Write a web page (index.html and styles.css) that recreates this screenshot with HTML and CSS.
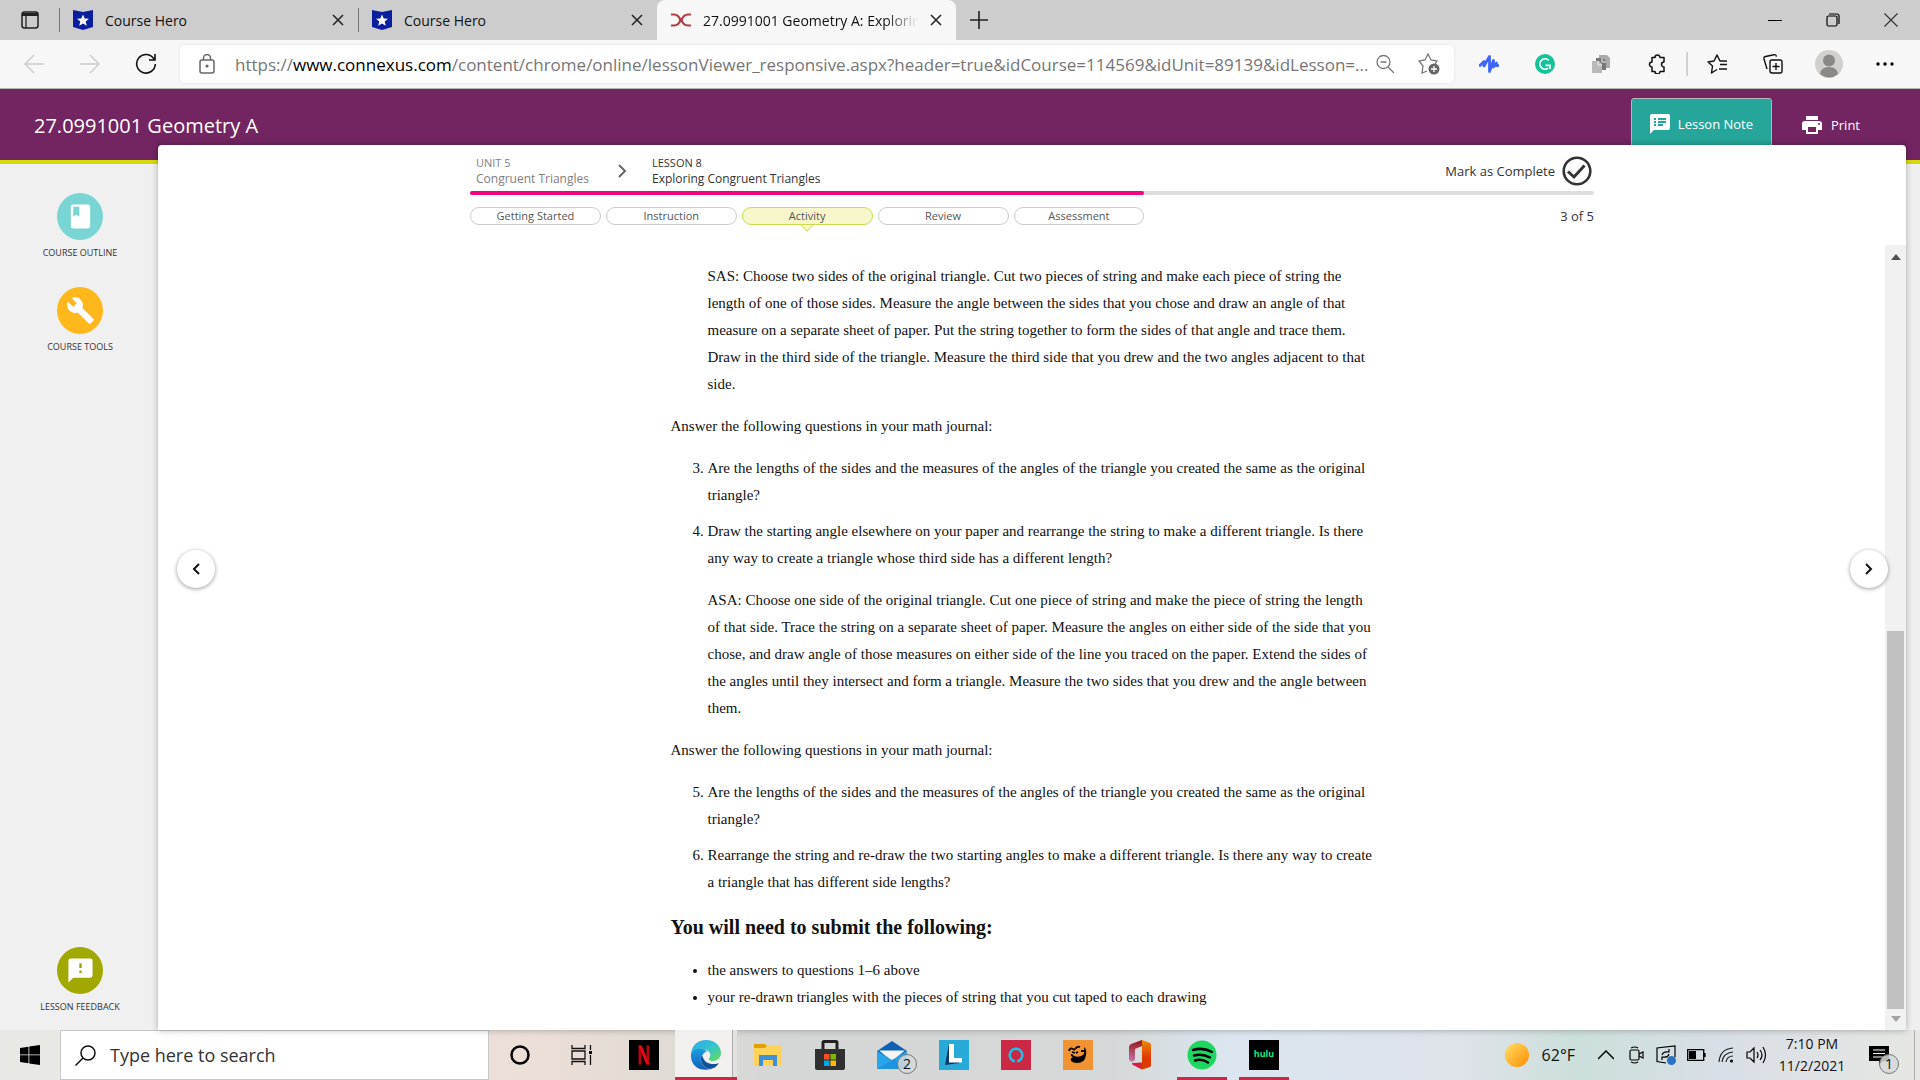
FILE: index.html
```html
<!DOCTYPE html>
<html lang="en">
<head>
<meta charset="utf-8">
<meta name="viewport" content="width=device-width, initial-scale=1">
<title>27.0991001 Geometry A: Exploring Congruent Triangles</title>
<link rel="stylesheet" href="styles.css">
</head>
<body>
<svg class="defs" aria-hidden="true">
  <defs>
    <linearGradient id="edge-a" x1="0" y1="0" x2="1" y2="1"><stop offset="0" stop-color="#2aa7e6"/><stop offset=".5" stop-color="#35c3d0"/><stop offset="1" stop-color="#66dd55"/></linearGradient>
    <linearGradient id="edge-b" x1="0" y1="0" x2="0" y2="1"><stop offset="0" stop-color="#1b9de2"/><stop offset="1" stop-color="#1160b8"/></linearGradient>
    <linearGradient id="office" x1="0" y1="0" x2="0" y2="1"><stop offset="0" stop-color="#f08a00"/><stop offset=".6" stop-color="#dc3c00"/></linearGradient>
    <linearGradient id="office-left" x1="0" y1="0" x2="0" y2="1"><stop offset="0" stop-color="#9c1414"/><stop offset="1" stop-color="#c07ab0"/></linearGradient>
    <linearGradient id="sun" x1="0" y1="0" x2="1" y2="1"><stop offset="0" stop-color="#ffe066"/><stop offset="1" stop-color="#ff8c00"/></linearGradient>
    <symbol id="hero" viewBox="0 0 20 20"><path d="M0 0l10 2L20 0v17l-10 3L0 17z" fill="#0a1e9e"/><path d="M10 4.500l1.700 4 4.300.3-3.300 2.800 1.100 4.200-3.800-2.300-3.800 2.300 1.100-4.200L4 8.800l4.300-.3z" fill="#fff"/></symbol>
    <symbol id="x" viewBox="0 0 12 12"><path d="M1 1l10 10M11 1L1 11" fill="none" stroke="#222" stroke-width="1.500"/></symbol>
  </defs>
</svg>
<div class="screen">
  <header class="browser">
    <nav class="tabs" aria-label="Browser tabs">
      <button class="tab-menu" aria-label="Tab actions"><svg width="20" height="20" viewBox="0 0 20 20"><rect x="2" y="2" width="16" height="16" rx="2.500" fill="none" stroke="#222" stroke-width="1.500"/><path d="M2 3h16v3H2z" fill="#222"/><path d="M6 6v12" stroke="#222" stroke-width="1.300"/></svg></button>
      <div class="tab"><svg width="20" height="20"><use href="#hero"/></svg><span class="tab-title">Course Hero</span><button class="close" aria-label="Close tab"><svg width="12" height="12"><use href="#x"/></svg></button></div>
      <div class="tab"><svg width="20" height="20"><use href="#hero"/></svg><span class="tab-title">Course Hero</span><button class="close" aria-label="Close tab"><svg width="12" height="12"><use href="#x"/></svg></button></div>
      <div class="tab active"><svg width="20" height="20" viewBox="0 0 20 20" fill="none" stroke="#b13a43" stroke-width="2.200"><path d="M0 4.500h3c4 0 5.500 3 6.500 5.500C8.500 13 7 15.500 3 15.500H0M20 4.500h-3c-4 0-5.500 3-6.500 5.500 1 3 2.500 5.500 6.500 5.500h3"/></svg><span class="tab-title fade">27.0991001 Geometry A: Explorin</span><button class="close" aria-label="Close tab"><svg width="12" height="12"><use href="#x"/></svg></button></div>
      <button class="new-tab" aria-label="New tab"><svg width="18" height="18" viewBox="0 0 18 18"><path d="M9 0v18M0 9h18" stroke="#222" stroke-width="1.600"/></svg></button>
      <div class="window-buttons">
        <button aria-label="Minimize"><svg width="14" height="14"><path d="M0 7.500h14" stroke="#000"/></svg></button>
        <button aria-label="Restore"><svg width="14" height="14" viewBox="0 0 14 14" fill="none" stroke="#000" stroke-width="1.200"><rect x="1" y="3" width="10" height="10" rx="1.500"/><path d="M3 1h8q2 0 2 2v8"/></svg></button>
        <button aria-label="Close"><svg width="14" height="14" viewBox="0 0 14 14"><path d="M.5 .5l13 13M13.500 .5l-13 13" stroke="#333" stroke-width="1.200"/></svg></button>
      </div>
    </nav>
    <div class="toolbar">
      <button class="tool" aria-label="Back"><svg width="20" height="20" viewBox="0 0 20 20" fill="none" stroke="#ccc" stroke-width="1.500"><path d="M20 10H1M10 1l-9 9 9 9"/></svg></button>
      <button class="tool" aria-label="Forward"><svg width="20" height="20" viewBox="0 0 20 20" fill="none" stroke="#ccc" stroke-width="1.500"><path d="M0 10h19M10 1l9 9-9 9"/></svg></button>
      <button class="tool" aria-label="Refresh"><svg width="22" height="22" viewBox="0 0 22 22" fill="none" stroke="#111" stroke-width="1.600"><path d="M19 6a9.300 9.300 0 1 0 1.300 5M20 1v6h-6"/></svg></button>
      <div class="address">
        <svg width="16" height="20" viewBox="0 0 16 20" fill="none" stroke="#666" stroke-width="1.500"><rect x="1" y="6" width="14" height="13" rx="2"/><path d="M4.500 6V4a3.500 3.500 0 0 1 7 0v2"/><circle cx="8" cy="12" r=".8" fill="#666"/></svg>
        <span class="url">https://<b>www.connexus.com</b>/content/chrome/online/lessonViewer_responsive.aspx?header=true&amp;idCourse=114569&amp;idUnit=89139&amp;idLesson=...</span>
        <button class="in-address" aria-label="Zoom out"><svg width="18" height="20" viewBox="0 0 18 20" fill="none" stroke="#777" stroke-width="1.300"><circle cx="7.500" cy="8" r="6.500"/><path d="M12 13l6 6M4.500 8h6"/></svg></button>
        <button class="in-address star" aria-label="Add to favorites"><svg width="22" height="22" viewBox="0 0 22 22" fill="none" stroke="#777" stroke-width="1.300"><path d="M9 18l-5 2 1-7-4-5 6-1 3-6 3 6 6 1-2 3"/><circle cx="16" cy="16" r="5.500" fill="#666" stroke="none"/><path d="M16 13v6M13 16h6" stroke="#fff"/></svg></button>
      </div>
      <button class="tool" aria-label="Read aloud extension"><svg width="20" height="20" viewBox="0 0 20 20" fill="none" stroke="#3f66ff" stroke-width="2.800" stroke-linejoin="round" stroke-linecap="round"><path d="M1 11.500L5 7.500V12l5.500-9.500v15l4-11V13l3-4v2.500H19"/></svg></button>
      <button class="tool" aria-label="Grammarly"><svg width="20" height="20" viewBox="0 0 20 20" fill="none"><circle cx="10" cy="10" r="10" fill="#15c39a"/><path d="M13.800 6.300A5.200 5.200 0 1 0 13 14.300M10.500 11.300H15V15" stroke="#fff" stroke-width="1.700"/></svg></button>
      <button class="tool" aria-label="Copy extension"><svg width="20" height="20" viewBox="0 0 20 20"><path d="M8 1h8l3 3v10H8z" fill="#aaa"/><path d="M5 4h7l3 3v9H5z" fill="#777"/><path d="M1 7h7l3 3v9H1z" fill="#b9b9b9"/><path d="M7 7v4h4M11 4v4h4" stroke="#eee" fill="none"/></svg></button>
      <button class="tool" aria-label="Extensions"><svg width="20" height="20" viewBox="0 0 20 20" fill="none" stroke="#111" stroke-width="1.500"><path d="M5 3.500h3a2.500 2.500 0 0 1 5 0h4V8a2.300 2.300 0 0 0 0 5v4.500h-4a2.500 2.500 0 0 1-5 0H5V13A2.400 2.400 0 1 1 5 8z" stroke-linejoin="round"/></svg></button>
      <i class="tool-divider"></i>
      <button class="tool" aria-label="Favorites"><svg width="20" height="20" viewBox="0 0 20 20" fill="none" stroke="#111" stroke-width="1.400" stroke-linejoin="round"><path d="M10 15.500L4.500 19l1-7L1 8l6-1 3-6 3 6h7M13 10.500h7M12 15h8"/></svg></button>
      <button class="tool" aria-label="Collections"><svg width="20" height="20" viewBox="0 0 20 20" fill="none" stroke="#111" stroke-width="1.400"><rect x="7" y="6" width="12" height="13" rx="2"/><path d="M4 15L1 5q-.5-2 1.500-2.500L11 .7q2-.3 2.500 2M13 9v7M9.500 12.500h7"/></svg></button>
      <button class="tool" aria-label="Profile"><svg width="28" height="28" viewBox="0 0 28 28"><circle cx="14" cy="14" r="14" fill="#d2d0ce"/><circle cx="14" cy="10.500" r="6" fill="#8a8886"/><path d="M5 24q1-7 9-7t9 7q-9 7-18 0z" fill="#8a8886"/></svg></button>
      <button class="tool" aria-label="Settings and more"><svg width="18" height="4" viewBox="0 0 18 4"><circle cx="2" cy="2" r="1.700"/><circle cx="9" cy="2" r="1.700"/><circle cx="16" cy="2" r="1.700"/></svg></button>
    </div>
  </header>

  <div class="site">
    <header class="site-header">
      <h1>27.0991001 Geometry A</h1>
      <button class="note"><svg width="20" height="20" viewBox="2 2 20 20" fill="#fff"><path d="M20 2H4a2 2 0 0 0-2 2v18l4-4h14a2 2 0 0 0 2-2V4a2 2 0 0 0-2-2zM8 14H6v-2h2v2zm0-3H6V9h2v2zm0-3H6V6h2v2zm7 6h-5v-2h5v2zm3-3h-8V9h8v2zm0-3h-8V6h8v2z"/></svg>Lesson Note</button>
      <button class="print"><svg width="20" height="20" viewBox="2 2 20 20" fill="#fff"><path d="M19 8H5a3 3 0 0 0-3 3v6h4v4h12v-4h4v-6a3 3 0 0 0-3-3zm-3 11H8v-5h8v5zm3-7a1 1 0 1 1 0-2 1 1 0 0 1 0 2zM18 3H6v4h12V3z"/></svg>Print</button>
    </header>
    <div class="site-main">
      <aside class="sidebar">
        <button class="side-item"><span class="disc outline"><svg width="29" height="29" viewBox="0 0 24 24" fill="#fff"><path d="M18 2H6a2 2 0 0 0-2 2v16a2 2 0 0 0 2 2h12a2 2 0 0 0 2-2V4a2 2 0 0 0-2-2zM6 4h5v8l-2.500-1.500L6 12V4z"/></svg></span>COURSE OUTLINE</button>
        <button class="side-item"><span class="disc tools"><svg width="29" height="29" viewBox="0 0 24 24" fill="#fff"><path d="M22.700 19l-9.100-9.100c.9-2.300.4-5-1.500-6.900-2-2-5-2.400-7.400-1.300L9 6 6 9 1.600 4.700C.4 7.100.9 10.100 2.900 12.100c1.900 1.900 4.600 2.400 6.900 1.500l9.100 9.100c.4.4 1 .4 1.400 0l2.300-2.300c.5-.4.5-1.100.1-1.400z"/></svg></span>COURSE TOOLS</button>
        <button class="side-item last"><span class="disc feedback"><svg width="29" height="29" viewBox="0 0 24 24" fill="#fff"><path d="M20 2H4a2 2 0 0 0-2 2v18l4-4h14a2 2 0 0 0 2-2V4a2 2 0 0 0-2-2zm-7 12h-2v-2h2v2zm0-4h-2V6h2v4z"/></svg></span>LESSON FEEDBACK</button>
      </aside>
      <main class="panel">
        <div class="lesson-bar">
          <div class="crumbs">
            <div class="crumb muted"><span>UNIT 5</span><span class="name">Congruent Triangles</span></div>
            <svg width="9" height="14" viewBox="0 0 9 14" fill="none" stroke="#666" stroke-width="2"><path d="M1 1l6 6-6 6"/></svg>
            <div class="crumb"><span>LESSON 8</span><span class="name">Exploring Congruent Triangles</span></div>
            <button class="complete">Mark as Complete<svg width="30" height="30" viewBox="0 0 30 30" fill="none" stroke="#333"><circle cx="15" cy="15" r="13.300" stroke-width="2.600"/><path d="M6 15.500l6 5.500L22.500 9.500" stroke-width="3"/></svg></button>
          </div>
          <div class="progress"><div class="progress-fill" style="width:60%"></div></div>
          <div class="steps">
            <nav class="pills" aria-label="Lesson sections">
              <a href="#start">Getting Started</a><a href="#instruction">Instruction</a><a href="#activity" class="current" aria-current="page">Activity</a><a href="#review">Review</a><a href="#assessment">Assessment</a>
            </nav>
            <span>3 of 5</span>
          </div>
        </div>
        <div class="scroller">
          <article class="lesson" id="activity">
            <div class="follow">
            <p>SAS: Choose two sides of the original triangle. Cut two pieces of string and make each piece of string the length of one of those sides. Measure the angle between the sides that you chose and draw an angle of that measure on a separate sheet of paper. Put the string together to form the sides of that angle and trace them. Draw in the third side of the triangle. Measure the third side that you drew and the two angles adjacent to that side.</p>
            </div>
            <p>Answer the following questions in your math journal:</p>
            <ol start="3">
              <li>Are the lengths of the sides and the measures of the angles of the triangle you created the same as the original triangle?</li>
              <li>Draw the starting angle elsewhere on your paper and rearrange the string to make a different triangle. Is there any way to create a triangle whose third side has a different length?
              <p>ASA: Choose one side of the original triangle. Cut one piece of string and make the piece of string the length of that side. Trace the string on a separate sheet of paper. Measure the angles on either side of the side that you chose, and draw angle of those measures on either side of the line you traced on the paper. Extend the sides of the angles until they intersect and form a triangle. Measure the two sides that you drew and the angle between them.</p></li>
            </ol>
            <p>Answer the following questions in your math journal:</p>
            <ol start="5">
              <li>Are the lengths of the sides and the measures of the angles of the triangle you created the same as the original triangle?</li>
              <li>Rearrange the string and re-draw the two starting angles to make a different triangle. Is there any way to create a triangle that has different side lengths?</li>
            </ol>
            <h2>You will need to submit the following:</h2>
            <ul>
              <li>the answers to questions 1–6 above</li>
              <li>your re-drawn triangles with the pieces of string that you cut taped to each drawing</li>
            </ul>
          </article>
          <div class="scrollbar" aria-hidden="true">
            <svg width="10" height="6"><path d="M0 6l5-6 5 6z" fill="#505050"/></svg>
            <div class="track"><div class="thumb"></div></div>
            <svg width="10" height="6"><path d="M0 0l5 6 5-6z" fill="#a3a3a3"/></svg>
          </div>
        </div>
        <button class="pager prev" aria-label="Previous page"><svg width="8" height="12" viewBox="0 0 8 12" fill="none" stroke="#111" stroke-width="2"><path d="M7 1L2 6l5 5"/></svg></button>
        <button class="pager next" aria-label="Next page"><svg width="8" height="12" viewBox="0 0 8 12" fill="none" stroke="#111" stroke-width="2"><path d="M1 1l5 5-5 5"/></svg></button>
      </main>
    </div>
  </div>

  <footer class="taskbar">
    <button class="start" aria-label="Start"><svg width="20" height="20" viewBox="0 0 20 20"><path d="M0 3l8.500-1.300v7.800H0zM9.300 1.500L20 0v9.500H9.300zM0 10.300h8.500v8L0 17zM9.300 10.300H20V20L9.300 18.400z"/></svg></button>
    <label class="search"><svg width="21" height="21" viewBox="0 0 21 21" fill="none" stroke="#111" stroke-width="1.500"><circle cx="13" cy="8" r="7"/><path d="M8 13L.5 20.500"/></svg><input type="text" placeholder="Type here to search" aria-label="Type here to search"></label>
    <button class="app" aria-label="Cortana"><svg width="20" height="20" viewBox="0 0 20 20"><circle cx="10" cy="10" r="8.500" fill="none" stroke="#000" stroke-width="2.500"/></svg></button>
    <button class="app" aria-label="Task view"><svg width="22" height="20" viewBox="0 0 22 20" fill="none" stroke="#111" stroke-width="1.300"><path d="M1 0v3.500h13V0M1 20v-3.500h13V20M1 6h13v8H1zM19.500 0v5M19.500 10v10"/><path d="M18 6h3v3h-3z" fill="#000" stroke="none"/></svg></button>
    <button class="app" aria-label="Netflix"><svg width="30" height="30" viewBox="0 0 30 30"><path d="M0 0h30v30H0z"/><path d="M11 5.500v19M19 5.500v19" stroke="#b20710" stroke-width="3"/><path d="M9.500 5.500h3.200l7.800 19h-3.200z" fill="#e50914"/></svg></button>
    <button class="app open focused" aria-label="Microsoft Edge"><svg width="30" height="30" viewBox="0 0 30 30"><path d="M0 14C1 5 7 0 15 0c9 0 15 6 15 13 0 5-4 8-8 8-3 0-5-1-4-3 3-3 1-8-5-8C7 10 2 12 0 14z" fill="url(#edge-a)"/><path d="M0 14c2-5 7-6 11-5 5 1 6 5 6 5-6-1-8 3-7 7 1 5 6 8 10 8C9 32-1 26 0 14z" fill="url(#edge-b)"/><path d="M11 15c-3 4 0 13 8 14 4 0 8-4 9-6-4 2-10 1-13-1-2-2-3-4-4-7z" fill="#11529c"/><circle cx="15.500" cy="15.500" r="3.500" fill="#f1f0ef"/></svg></button>
    <button class="app" aria-label="File Explorer"><svg width="28" height="24" viewBox="0 0 28 24"><path d="M0 1h11l2 2h15v4H0z" fill="#dfa000"/><path d="M0 5h11l2-2h15v19H0z" fill="#ffd35a"/><path d="M5 23V12h18v11h-4v-6H9v6z" fill="#3d91da"/></svg></button>
    <button class="app" aria-label="Microsoft Store"><svg width="30" height="30" viewBox="0 0 30 30"><path d="M8 9V2.500q0-1 1-1h12q1 0 1 1V9" fill="none" stroke="#222" stroke-width="3"/><path d="M0 9h30v19q0 2-2 2H2q-2 0-2-2z" fill="#303030"/><path d="M9 14h5.500v5.500H9z" fill="#f25022"/><path d="M15.500 14H21v5.500h-5.500z" fill="#7fba00"/><path d="M9 20.500h5.500V26H9z" fill="#00a4ef"/><path d="M15.500 20.500H21V26h-5.500z" fill="#ffb900"/></svg></button>
    <button class="app" aria-label="Mail, 2 unread"><svg width="30" height="28" viewBox="0 0 30 28"><path d="M0 10L15 0l15 10v18H0z" fill="#0d62b5"/><path d="M2 9.500h26L15 20z" fill="#f4f4f4"/><path d="M0 10l15 9 15-9v18H0z" fill="#2aa5ea"/><path d="M0 28l17-10 13 10z" fill="#1f93df"/></svg><span class="badge">2</span></button>
    <button class="app" aria-label="L"><svg width="30" height="30" viewBox="0 0 30 30"><path d="M0 0h30v30H0z" fill="#27aad8"/><path d="M10 4L6 25l15-2-8-4z" fill="#10356b"/><path d="M10 4h5v14h8v4.500H10z" fill="#fff"/></svg></button>
    <button class="app" aria-label="Alexa"><svg width="30" height="30" viewBox="0 0 30 30"><path d="M0 0h30v30H0z" fill="#ca2844"/><path d="M13.800 21.300a6.300 6.300 0 1 1 2.400 0" fill="none" stroke="#15c5ef" stroke-width="2.400"/></svg></button>
    <button class="app" aria-label="Cartoon app"><svg width="30" height="30" viewBox="0 0 30 30"><path d="M0 0h30v30H0z" fill="#f29333"/><path d="M8 21q-1-3 2-4-3-1-2-3 2 0 3 2 5 2 9-1 2-2 1-8 3 2 2 8-1 8-9 8-4 0-6-2z"/><path d="M6 11q1-4 4-2l2 1M12 9q2-3 5-2M18 11h4M9 12l3 1M13 13l2-1" stroke="#000" stroke-width="1.800" fill="none"/></svg></button>
    <button class="app" aria-label="Office"><svg width="24" height="30" viewBox="0 0 24 30"><path d="M14 0L3 4Q1 5 1 7v12q0 2 3 3l3-2V9l7-3z" fill="url(#office-left)"/><path d="M14 0l8 3q1 .5 1 2v20q0 1.500-1 2l-8 2.500z" fill="url(#office)"/><path d="M4 23l10-.5v7L5 25q-1-.5-1-2z" fill="#d8203a"/></svg></button>
    <button class="app open" aria-label="Spotify"><svg width="30" height="30" viewBox="0 0 30 30"><circle cx="15" cy="15" r="14.500" fill="#1ed760"/><path d="M6 10q10-3 19 2M7 15.500q9-2 16 2M8 20.500q7-2 13 2" fill="none" stroke="#000" stroke-width="2.500" stroke-linecap="round"/></svg></button>
    <button class="app open" aria-label="Hulu"><span class="hulu">hulu</span></button>
    <div class="tray">
      <button class="weather"><svg width="24" height="24"><circle cx="12" cy="12" r="12" fill="url(#sun)"/></svg>62°F</button>
      <div class="tray-icons">
        <button aria-label="Show hidden icons"><svg width="16" height="10" viewBox="0 0 16 10"><path d="M0 9l8-8 8 8" fill="none" stroke="#000" stroke-width="1.500"/></svg></button>
        <button aria-label="Meet now"><svg width="15" height="18" viewBox="0 0 15 18" fill="none" stroke="#000" stroke-width="1.200"><rect x="1" y="4" width="9" height="10" rx="1.500"/><path d="M10 8l4-2v6l-4-2M2 2q4-2 7 0M2 16q4 2 7 0"/></svg></button>
        <button aria-label="Windows update"><svg width="20" height="20" viewBox="0 0 20 20" fill="none" stroke="#000" stroke-width="1.200"><path d="M10 18L1 16.500V3l18-2v11M6 10q1-4 7-3M13 4v3h-3M13 9q-1 4-7 3M6 15v-3h3"/><circle cx="15.500" cy="15.500" r="4.500" fill="#2a72c3" stroke="none"/></svg></button>
        <button aria-label="Battery"><svg width="19" height="12" viewBox="0 0 19 12"><path d="M.7 .7h16v10.600h-16zM18 4v4" fill="none" stroke="#000" stroke-width="1.300"/><path d="M2 2h7v8H2z"/></svg></button>
        <button aria-label="Wi-Fi"><svg width="16" height="16" viewBox="0 0 16 16" fill="none" stroke="#222" stroke-width="1.200"><path d="M1 15Q2 2 15 1M4 15Q5 6 15 5M8 15Q9 9 15 9"/><circle cx="13.500" cy="14" r="1.500" fill="#000" stroke="none"/></svg></button>
        <button aria-label="Volume"><svg width="21" height="18" viewBox="0 0 21 18" fill="none" stroke="#000" stroke-width="1.200"><path d="M1 6h3l4-4v14l-4-4H1zM11 6q2 3 0 6M14 4q4 5 0 10M17 1q5 8 0 16"/></svg></button>
      </div>
      <div class="clock"><span>7:10 PM</span><span>11/2/2021</span></div>
      <button class="notices" aria-label="Notifications, 1 new"><svg width="20" height="20" viewBox="0 0 20 20"><path d="M0 1h20v15h-6l-4 4v-4H0z"/><path d="M4 5h12M4 8.500h12M4 12h12" stroke="#fff" stroke-width="1.200"/></svg><span class="badge">1</span></button>
    </div>
  </footer>
</div>
</body>
</html>
```
FILE: styles.css
```css
* { box-sizing: border-box; }
body { margin: 0; font-family: "Open Sans", "Noto Sans", sans-serif; color: #333; }
button { padding: 0; border: 0; background: none; font: inherit; color: inherit; display: flex; align-items: center; justify-content: center; }
svg { display: block; flex: none; }
.defs { position: absolute; width: 0; height: 0; }
.screen { height: 100vh; display: flex; flex-direction: column; overflow: hidden; }

/* browser window */
.tabs { display: flex; height: 40px; background: #cdcdcd; color: #111; font-size: 14px; }
.tab-menu { width: 59px; }
.tab { position: relative; flex: 0 1 299px; min-width: 0; display: flex; align-items: center; gap: 12px; padding: 0 14px; }
.tab:not(.active)::before { content: ""; position: absolute; left: 0; top: 8px; width: 1px; height: 24px; background: #777; }
.tab.active { background: #f7f7f7; border-radius: 8px 8px 0 0; }
.tab-title { flex: 1; min-width: 0; overflow: hidden; white-space: nowrap; }
.fade { -webkit-mask-image: linear-gradient(90deg, #000 85%, transparent); mask-image: linear-gradient(90deg, #000 85%, transparent); }
.new-tab { width: 46px; }
.window-buttons { display: flex; margin-left: auto; }
.window-buttons button { width: 58px; }
.toolbar { display: flex; align-items: center; height: 49px; padding: 0 7px 0 6px; background: #f7f7f7; border-bottom: 1px solid #b8b8b8; }
.tool { width: 56px; flex: none; }
.tool-divider { width: 2px; height: 24px; margin: 0 1px; background: #d0d0d0; }
.address { flex: 1; min-width: 0; display: flex; align-items: center; height: 38px; margin: 0 7px 0 6px; padding: 0 13px 0 19px; background: #fff; border-radius: 5px; box-shadow: 0 0 3px #ddd; }
.url { flex: 1; min-width: 0; margin-left: 20px; overflow: hidden; white-space: nowrap; font-size: 17px; color: #767676; }
.url b { font-weight: 400; color: #000; }
.in-address { width: 24px; flex: none; }
.star { margin-left: 20px; }

/* site */
.site { flex: 1; min-height: 0; display: flex; flex-direction: column; background: #f0f0f0; }
.site-header { display: flex; height: 75px; flex: none; padding: 9px 60px 0 34px; background: #722561; border-bottom: 4px solid #d5dc0b; color: #fff; font-size: 13px; }
h1 { margin: 16px auto 0 0; font-size: 20px; line-height: 24px; font-weight: 400; }
.note { width: 141px; height: 48px; gap: 8px; padding-top: 4px; background: #26a69a; border: 1px solid #b0b8bc; border-radius: 3px 3px 0 0; }
.print { gap: 9px; height: 53px; margin-left: 30px; }
.site-main { flex: 1; min-height: 0; display: flex; padding-right: 14px; }
.sidebar { width: 158px; flex: none; display: flex; flex-direction: column; gap: 25px; padding: 29px 0 14px 2px; }
.side-item { flex-direction: column; gap: 4px; font-size: 9px; line-height: 18px; }
.last { margin-top: auto; }
.disc { display: grid; place-items: center; width: 46px; height: 47px; border-radius: 50%; }
.outline { background: #78d5d3; }
.tools { background: #ffb81c; }
.feedback { background: #a1a800; }
.panel { position: relative; flex: 1; min-width: 0; margin-top: -19px; display: flex; flex-direction: column; background: #fff; border-radius: 4px 4px 0 0; box-shadow: 0 0 7px rgba(0,0,0,.3); }
.lesson-bar { width: 100%; max-width: 1124px; height: 100px; margin: 0 auto; flex: none; }
.crumbs { display: flex; align-items: center; height: 46px; padding: 6px 2px 0 6px; }
.crumb { display: flex; flex-direction: column; font-size: 11px; line-height: 16px; }
.crumb .name { font-size: 12px; }
.muted { color: #808080; }
.crumbs > svg { margin: 0 25px 0 29px; }
.complete { gap: 7px; margin-left: auto; font-size: 13px; }
.progress { height: 4px; background: #ddd; border-radius: 2px; }
.progress-fill { height: 4px; background: #f0047f; border-radius: 2px; }
.steps { display: flex; justify-content: space-between; align-items: center; padding-top: 11px; font-size: 13px; line-height: 20px; }
.pills { display: flex; gap: 5px; width: 60%; }
.pills a { position: relative; flex: 1; height: 18px; border: 1px solid #ccc; border-radius: 9px; font-size: 11px; line-height: 16px; text-align: center; color: #555; text-decoration: none; }
.pills .current { background: #f8f7cc; border-color: #cbdc4a; }
.current::after { content: ""; position: absolute; left: 50%; top: 12px; width: 9px; height: 9px; margin-left: -5px; background: #f8f7cc; border: solid #cbdc4a; border-width: 0 1px 1px 0; transform: rotate(45deg); clip-path: polygon(100% 0, 100% 100%, 0 100%); }
.scroller { flex: 1; min-height: 0; display: flex; overflow: hidden; }
.lesson { width: 100%; max-width: 702px; margin: 0 auto; padding-top: 18px; font-family: "Liberation Serif", "Times New Roman", serif; font-size: 15px; line-height: 27px; color: #111; }
.lesson p { margin: 0 0 15px; }
.follow { padding-left: 37px; }
.lesson ol, .lesson ul { margin: 0 0 15px; padding-left: 37px; }
.lesson ol li + li { margin-top: 9px; }
.lesson li p { margin: 15px 0 0; }
.lesson h2 { margin: 17px 0 16px; font-size: 20px; line-height: 28px; }
.scrollbar { width: 21px; flex: none; display: flex; flex-direction: column; align-items: center; gap: 7px; padding: 9px 0 8px; background: #f1f1f1; }
.track { flex: 1; width: 17px; display: flex; flex-direction: column; justify-content: flex-end; }
.thumb { height: 51%; background: #c1c1c1; }
.pager { position: absolute; top: 405px; width: 38px; height: 38px; border-radius: 50%; background: #fff; box-shadow: 0 1px 4px rgba(0,0,0,.4); }
.prev { left: 19px; }
.next { right: 18px; }

/* desktop taskbar */
.taskbar { display: flex; height: 50px; flex: none; background: linear-gradient(90deg, #e8e9e6 0, #ecdfd7 28%, #e0dbd5 35%, #d5d7d7 40%, #d5d8d8 58%, #dbe6f0 64%, #dfe3ea 76%, #ccdfdb 82%, #d9dfe7 90%, #e6e7e2); color: #111; }
.start { width: 60px; }
.search { flex: 0 1 429px; display: flex; align-items: center; gap: 14px; padding-left: 14px; background: #fff; border: 1px solid #c8c8c8; }
.search input { flex: 1; min-width: 0; border: 0; padding: 0; outline: 0; background: none; font: inherit; font-size: 18px; }
.search input::placeholder { color: #333; opacity: 1; }
.app { position: relative; flex: 0 1 62px; }
.open::after { content: ""; position: absolute; left: 6px; right: 6px; bottom: 0; height: 3px; background: #ca2844; }
.focused { background: linear-gradient(90deg, #f1f0ef 57px, #aaa 57px, #aaa 58px, #e2e2e2 58px); }
.focused::after { left: 0; right: 0; }
.hulu { width: 30px; height: 30px; background: #000; color: #1ce783; font-size: 9px; font-weight: 700; line-height: 28px; text-align: center; }
.badge { position: absolute; width: 20px; height: 20px; border: 1px solid #777; border-radius: 50%; background: rgba(214,216,217,.85); font-size: 14px; line-height: 18px; text-align: center; }
.app .badge { left: 36px; top: 24px; }
.tray { display: flex; align-items: center; margin-left: auto; }
.weather { gap: 13px; font-size: 16px; }
.tray-icons { display: flex; margin-left: 16px; }
.tray-icons button { width: 30px; }
.clock { display: flex; flex-direction: column; align-items: center; width: 82px; font-size: 14px; line-height: 22px; }
.notices { position: relative; align-self: stretch; width: 62px; margin-right: 5px; padding-right: 9px; border-right: 1px solid #aaa; }
.notices .badge { left: 26px; top: 24px; }
```
